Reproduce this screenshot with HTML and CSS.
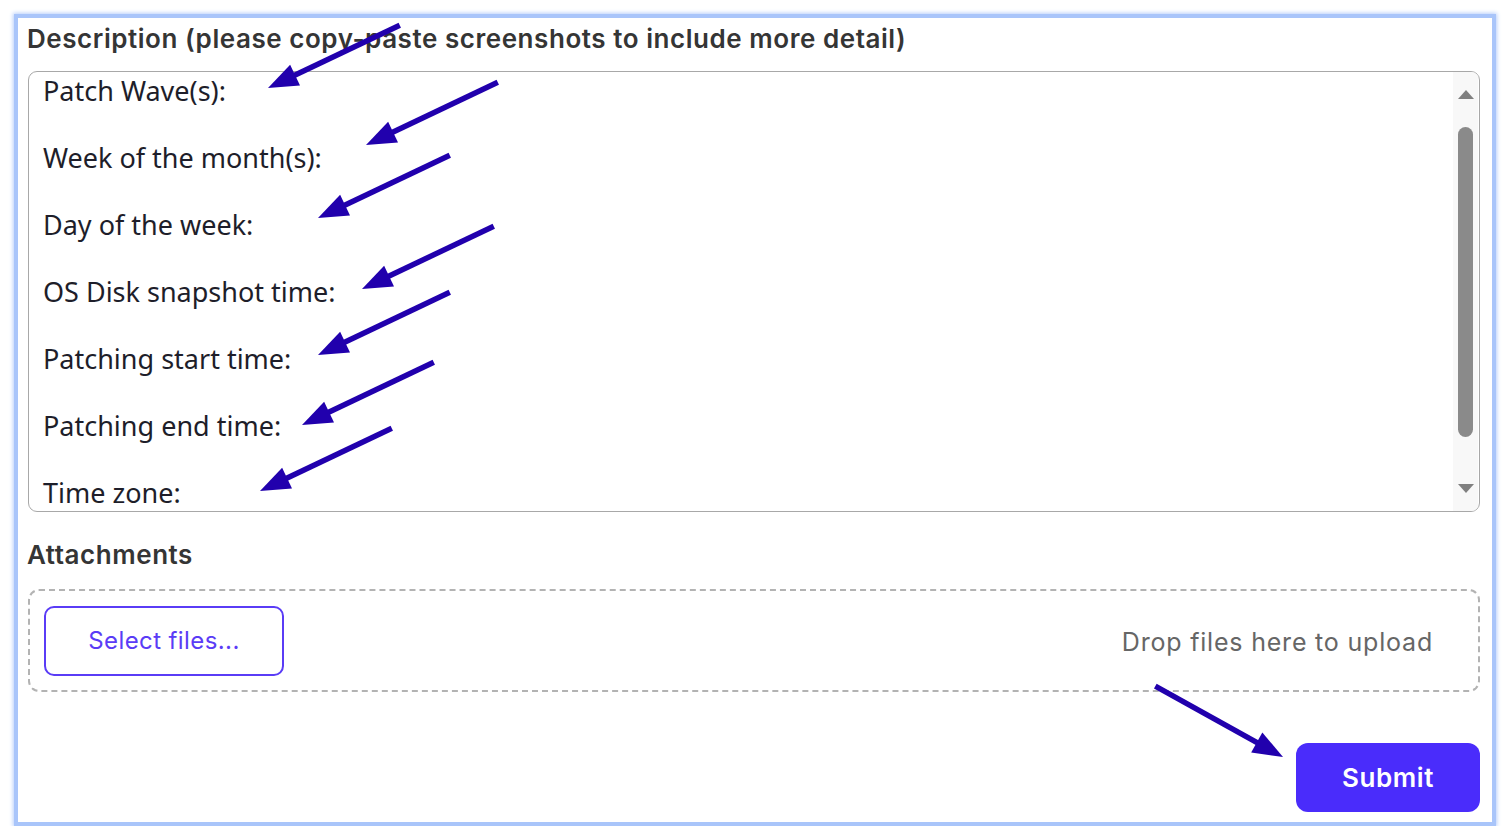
FILE: index.html
```html
<!DOCTYPE html>
<html lang="en">
<head>
    <meta charset="UTF-8">
    <title>Request form</title>
    <link rel="stylesheet" href="styles.css">
</head>
<body>
    <div class="frame">
        <label class="field-label">Description (please copy-paste screenshots to include more detail)</label>

        <div class="textbox">
            <div class="textbox-content">
                <div class="line">Patch Wave(s):</div>
                <div class="line">Week of the month(s):</div>
                <div class="line">Day of the week:</div>
                <div class="line">OS Disk snapshot time:</div>
                <div class="line">Patching start time:</div>
                <div class="line">Patching end time:</div>
                <div class="line">Time zone:</div>
            </div>
            <div class="scrollbar">
                <span class="scroll-up"></span>
                <span class="scroll-thumb"></span>
                <span class="scroll-down"></span>
            </div>
        </div>

        <label class="field-label attach-label">Attachments</label>

        <div class="dropzone">
            <button class="select-btn">Select files...</button>
            <span class="drop-hint">Drop files here to upload</span>
        </div>

        <div class="actions">
            <button class="submit-btn">Submit</button>
        </div>

        <!-- annotation arrows drawn over the form, each placed at its tip -->
        <svg class="arrows" width="1512" height="838" viewBox="0 0 1512 838">
            <g fill="#2100ad" stroke="#2100ad" stroke-width="5.5">
                <g transform="translate(268 88) rotate(154.5)">
                    <line x1="-146" y1="0" x2="-26" y2="0"/><polygon stroke="none" points="0,0 -30,-11.5 -30,11.5"/>
                </g>
                <g transform="translate(366 145) rotate(154.5)">
                    <line x1="-146" y1="0" x2="-26" y2="0"/><polygon stroke="none" points="0,0 -30,-11.5 -30,11.5"/>
                </g>
                <g transform="translate(318 218) rotate(154.5)">
                    <line x1="-146" y1="0" x2="-26" y2="0"/><polygon stroke="none" points="0,0 -30,-11.5 -30,11.5"/>
                </g>
                <g transform="translate(362 289) rotate(154.5)">
                    <line x1="-146" y1="0" x2="-26" y2="0"/><polygon stroke="none" points="0,0 -30,-11.5 -30,11.5"/>
                </g>
                <g transform="translate(318 355) rotate(154.5)">
                    <line x1="-146" y1="0" x2="-26" y2="0"/><polygon stroke="none" points="0,0 -30,-11.5 -30,11.5"/>
                </g>
                <g transform="translate(302 425) rotate(154.5)">
                    <line x1="-146" y1="0" x2="-26" y2="0"/><polygon stroke="none" points="0,0 -30,-11.5 -30,11.5"/>
                </g>
                <g transform="translate(260 491) rotate(154.5)">
                    <line x1="-146" y1="0" x2="-26" y2="0"/><polygon stroke="none" points="0,0 -30,-11.5 -30,11.5"/>
                </g>
                <g transform="translate(1283 757) rotate(29)">
                    <line x1="-146" y1="0" x2="-26" y2="0"/><polygon stroke="none" points="0,0 -30,-11.5 -30,11.5"/>
                </g>
            </g>
        </svg>
    </div>
</body>
</html>
```

FILE: styles.css
```css
body {
    margin: 0;
    padding: 14px 16px 0 14px;
    background-color: #ffffff;
}
.frame {
    position: relative;
    box-sizing: border-box;
    width: 1482px;
    height: 812px;
    border: 4px solid #a9c5fa;
    box-shadow: 0 0 4px 1px #b8cffb;
    background: #ffffff;
    padding: 4px 12px 0 9px;
    display: flex;
    flex-direction: column;
}
.field-label {
    font-family: Inter, "Liberation Sans", sans-serif;
    font-weight: 600;
    font-size: 26px;
    letter-spacing: 0.55px;
    line-height: 34px;
    color: #353535;
}
.textbox {
    margin: 15px 0 0 1px;
    height: 441px;
    box-sizing: border-box;
    border: 1.5px solid #a8a8a8;
    border-radius: 9px;
    display: flex;
    overflow: hidden;
}
.textbox-content {
    flex: 1;
    padding: 2px 0 0 14px;
    display: flex;
    flex-direction: column;
    gap: 33.5px;
    font-family: "Noto Sans", "Open Sans", sans-serif;
    font-size: 27px;
    line-height: 33.5px;
    color: #1e1e2a;
}
.scrollbar {
    width: 25px;
    background: #f8f8f8;
    display: flex;
    flex-direction: column;
    align-items: center;
    padding-top: 18px;
    margin-right: 1px;
}
.scroll-up,
.scroll-down {
    width: 0;
    height: 0;
    border-left: 8px solid transparent;
    border-right: 8px solid transparent;
}
.scroll-up {
    border-bottom: 9px solid #808080;
}
.scroll-down {
    border-top: 9px solid #808080;
}
.scroll-thumb {
    width: 15px;
    height: 310px;
    margin: 28px 0 47px;
    background: #8a8a8a;
    border-radius: 8px;
}
.attach-label {
    margin-top: 26px;
}
.dropzone {
    margin: 17px 0 0 1px;
    height: 103px;
    box-sizing: border-box;
    border: 2px dashed #b3b3b3;
    border-radius: 11px;
    display: flex;
    align-items: center;
    justify-content: space-between;
    padding: 0 45px 0 14px;
}
.select-btn {
    width: 240px;
    height: 70px;
    border: 2px solid #5a3cf6;
    border-radius: 10px;
    background: #ffffff;
    color: #5a3cf6;
    font-family: Inter, "Liberation Sans", sans-serif;
    font-size: 24px;
    letter-spacing: 0.4px;
    font-weight: 400;
    cursor: pointer;
}
.drop-hint {
    font-family: Inter, "Liberation Sans", sans-serif;
    font-size: 25px;
    letter-spacing: 0.8px;
    color: #666666;
    margin-top: 2px;
}
.actions {
    display: flex;
    justify-content: flex-end;
    margin-top: 51px;
}
.submit-btn {
    width: 184px;
    height: 69px;
    border: none;
    border-radius: 12px;
    background-color: #4a2cfb;
    color: #ffffff;
    font-family: Inter, "Liberation Sans", sans-serif;
    font-size: 26px;
    letter-spacing: 0.6px;
    font-weight: 600;
    cursor: pointer;
}
.arrows {
    position: absolute;
    left: -18px;
    top: -18px;
    pointer-events: none;
}
```
